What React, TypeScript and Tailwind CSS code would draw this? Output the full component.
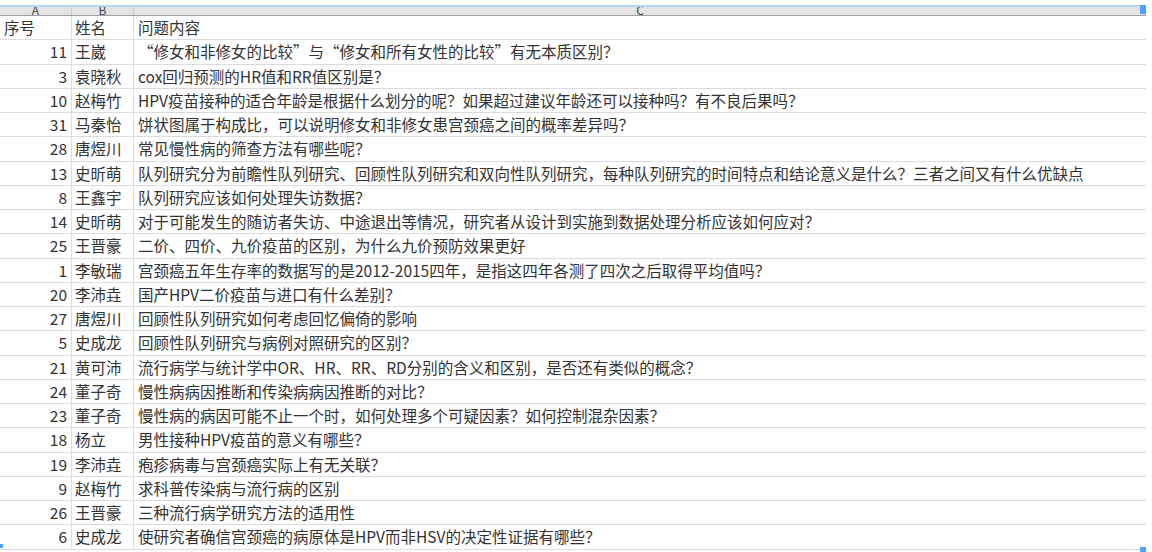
const rows: [string, string, string][] = [
  ["11", "王崴", "“修女和非修女的比较”与“修女和所有女性的比较”有无本质区别？"],
  ["3", "袁晓秋", "cox回归预测的HR值和RR值区别是？"],
  ["10", "赵梅竹", "HPV疫苗接种的适合年龄是根据什么划分的呢？如果超过建议年龄还可以接种吗？有不良后果吗？"],
  ["31", "马秦怡", "饼状图属于构成比，可以说明修女和非修女患宫颈癌之间的概率差异吗？"],
  ["28", "唐煜川", "常见慢性病的筛查方法有哪些呢？"],
  ["13", "史昕萌", "队列研究分为前瞻性队列研究、回顾性队列研究和双向性队列研究，每种队列研究的时间特点和结论意义是什么？三者之间又有什么优缺点"],
  ["8", "王鑫宇", "队列研究应该如何处理失访数据？"],
  ["14", "史昕萌", "对于可能发生的随访者失访、中途退出等情况，研究者从设计到实施到数据处理分析应该如何应对？"],
  ["25", "王晋豪", "二价、四价、九价疫苗的区别，为什么九价预防效果更好"],
  ["1", "李敏瑞", "宫颈癌五年生存率的数据写的是2012-2015四年，是指这四年各测了四次之后取得平均值吗？"],
  ["20", "李沛垚", "国产HPV二价疫苗与进口有什么差别？"],
  ["27", "唐煜川", "回顾性队列研究如何考虑回忆偏倚的影响"],
  ["5", "史成龙", "回顾性队列研究与病例对照研究的区别？"],
  ["21", "黄可沛", "流行病学与统计学中OR、HR、RR、RD分别的含义和区别，是否还有类似的概念？"],
  ["24", "董子奇", "慢性病病因推断和传染病病因推断的对比？"],
  ["23", "董子奇", "慢性病的病因可能不止一个时，如何处理多个可疑因素？如何控制混杂因素？"],
  ["18", "杨立", "男性接种HPV疫苗的意义有哪些？"],
  ["19", "李沛垚", "疱疹病毒与宫颈癌实际上有无关联？"],
  ["9", "赵梅竹", "求科普传染病与流行病的区别"],
  ["26", "王晋豪", "三种流行病学研究方法的适用性"],
  ["6", "史成龙", "使研究者确信宫颈癌的病原体是HPV而非HSV的决定性证据有哪些？"],
];

const font = { fontFamily: '"Noto Sans CJK SC", "Liberation Sans", sans-serif' };

function Row({ a, b, c, right = true }: { a: string; b: string; c: string; right?: boolean }) {
  return (
    <div className="flex h-[24.25px] border-b border-[#dcdcdc] text-[15.5px] leading-[23px] text-[#333]">
      <div className={`w-[72px] shrink-0 border-r border-[#dcdcdc] px-[4px] ${right ? "text-right" : "text-left"}`}>{a}</div>
      <div className="w-[62px] shrink-0 border-r border-[#dcdcdc] px-[3px] whitespace-nowrap overflow-hidden">{b}</div>
      <div className="flex-1 whitespace-nowrap overflow-hidden px-[4px]">{c}</div>
    </div>
  );
}

export default function App() {
  return (
    <div className="relative w-[1152px] h-[552px] overflow-hidden bg-white" style={font}>
      <div className="h-[5px] bg-white" />
      <div className="h-[2px] bg-[#b3d7fb] mr-[6px]" />
      <div className="flex h-[9px] overflow-hidden bg-[#e4e4e4] border-b-[1.5px] border-[#a0a0a0] text-[12px] leading-[6px] text-[#444] mr-[6px]">
        <div className="w-[72px] border-r border-[#c8c8c8] text-center">A</div>
        <div className="w-[62px] border-r border-[#c8c8c8] text-center">B</div>
        <div className="flex-1 text-center">C</div>
      </div>
      <div className="mr-[6px]">
        <Row a="序号" b="姓名" c="问题内容" right={false} />
        {rows.map((r, i) => (
          <Row key={i} a={r[0]} b={r[1]} c={r[2]} />
        ))}
      </div>
      <div className="absolute right-[6px] top-[5px] w-[6px] h-[9px] bg-[#4da3ff]" />
      <div className="absolute right-[6px] bottom-[0px] w-[6px] h-[5px] bg-[#4da3ff]" />
      <div className="absolute left-0 bottom-[4px] w-[3px] h-[4px] bg-[#4da3ff]" />
    </div>
  );
}
